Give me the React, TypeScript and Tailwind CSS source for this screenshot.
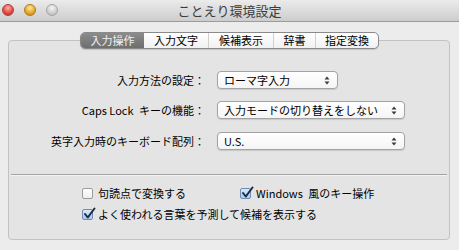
import React from "react";

const tabs = [
  { label: "入力操作", w: "w-[63px]" },
  { label: "入力文字", w: "w-[64px]" },
  { label: "候補表示", w: "w-[65px]" },
  { label: "辞書", w: "w-[42px]" },
  { label: "指定変換", w: "w-[63px]" },
];

function Arrows() {
  return (
    <svg width="6" height="9" viewBox="0 0 6 9" className="shrink-0">
      <path d="M3 0.5 L5.5 3.5 L0.5 3.5 Z" fill="#3a3a3a" />
      <path d="M3 8.5 L5.5 5.5 L0.5 5.5 Z" fill="#3a3a3a" />
    </svg>
  );
}

function Popup({ text, w }: { text: string; w: string }) {
  return (
    <div
      className={`${w} h-[18px] flex items-center justify-between pl-[6px] pr-[7px] rounded-[4px] border border-[#a3a3a3] bg-gradient-to-b from-white to-[#f5f5f5] shadow-[0_1px_1px_rgba(0,0,0,0.12)] text-[11px] text-black`}
    >
      <span className="leading-none">{text}</span>
      <Arrows />
    </div>
  );
}

function Checkbox({ checked, label }: { checked?: boolean; label: string }) {
  return (
    <div className="flex items-center gap-[5px] h-[14px]">
      <div
        className={`relative w-[11px] h-[11px] rounded-[2px] border ${
          checked
            ? "border-[#6f8db5] bg-gradient-to-b from-[#d9e8f8] to-[#a9c9ee]"
            : "border-[#9c9c9c] bg-gradient-to-b from-white to-[#eeeeee]"
        }`}
      >
        {checked && (
          <svg
            width="13"
            height="13"
            viewBox="0 0 13 13"
            className="absolute -top-[3px] left-[0px] overflow-visible"
          >
            <path
              d="M2 7 L4.8 10.5 L11.5 1.5"
              fill="none"
              stroke="#1c2a44"
              strokeWidth="2"
              strokeLinecap="round"
              strokeLinejoin="round"
            />
          </svg>
        )}
      </div>
      <span className="text-[11px] leading-none text-black">{label}</span>
    </div>
  );
}

function Row({ label, children }: { label: string; children: React.ReactNode }) {
  return (
    <div className="flex items-center h-[18px]">
      <div className="w-[197px] pr-[1px] text-right text-[11px] leading-none text-black">
        {label}
      </div>
      <div className="ml-[11px]">{children}</div>
    </div>
  );
}

export default function App() {
  return (
    <div
      className="w-[459px] h-[250px] bg-[#ececec] flex flex-col overflow-hidden"
      style={{ fontFamily: '"Noto Sans CJK JP", "Noto Sans", sans-serif' }}
    >
      {/* Title bar */}
      <div className="relative h-[22px] shrink-0 flex items-center justify-center bg-gradient-to-b from-[#ebebeb] to-[#cdcdcd] border-b border-[#9b9b9b]">
        <div className="absolute left-[2px] top-[4px] flex gap-[10px]">
          <div className="w-[12px] h-[12px] rounded-full border border-[#a8423c] bg-[radial-gradient(circle_at_50%_30%,#ffb0a8,#e2463d_60%,#b9261f)]" />
          <div className="w-[12px] h-[12px] rounded-full border border-[#b07b1a] bg-[radial-gradient(circle_at_50%_30%,#ffe7a3,#e3a628_60%,#c17f0f)]" />
          <div className="w-[12px] h-[12px] rounded-full border border-[#a5a5a5] bg-[radial-gradient(circle_at_50%_30%,#f5f5f5,#cdcdcd_60%,#b4b4b4)]" />
        </div>
        <span className="text-[13px] leading-none text-[#3b3b3b]">ことえり環境設定</span>
      </div>

      {/* Tabs */}
      <div className="relative z-10 mt-[10px] ml-[80px] flex h-[17px] w-fit rounded-[5px] border border-[#8a8a8a] bg-gradient-to-b from-white to-[#f1f1f1] shadow-[0_1px_1px_rgba(0,0,0,0.15)] overflow-hidden">
        {tabs.map((t, i) => (
          <div
            key={t.label}
            className={`${t.w} flex items-center justify-center text-[11px] leading-none ${
              i === 0
                ? "bg-gradient-to-b from-[#8c8c8c] to-[#6e6e6e] text-[#f2f2f2]"
                : "text-black"
            } ${i > 1 ? "border-l border-[#cfcfcf]" : ""}`}
          >
            {t.label}
          </div>
        ))}
      </div>

      {/* Group box */}
      <div className="-mt-[9px] ml-[8px] w-[442px] h-[200px] rounded-[4px] border border-[#c2c2c2] bg-[#e4e4e4] pt-[30px] flex flex-col">
        <Row label="入力方法の設定：">
          <Popup text="ローマ字入力" w="w-[121px]" />
        </Row>
        <div className="mt-[12px]">
          <Row label={"Caps Lock\u2002キーの機能："}>
            <Popup text="入力モードの切り替えをしない" w="w-[188px]" />
          </Row>
        </div>
        <div className="mt-[13px]">
          <Row label="英字入力時のキーボード配列：">
            <Popup text="U.S." w="w-[188px]" />
          </Row>
        </div>
        <div className="mt-[24px] mx-[2px] h-px bg-[#a3a3a3] shadow-[0_1px_0_#f4f4f4]" />
        <div className="mt-[11px] ml-[73px] flex flex-col gap-[7px]">
          <div className="flex">
            <div className="w-[158px]">
              <Checkbox label="句読点で変換する" />
            </div>
            <Checkbox checked label={"Windows\u2002風のキー操作"} />
          </div>
          <Checkbox checked label="よく使われる言葉を予測して候補を表示する" />
        </div>
      </div>
    </div>
  );
}
